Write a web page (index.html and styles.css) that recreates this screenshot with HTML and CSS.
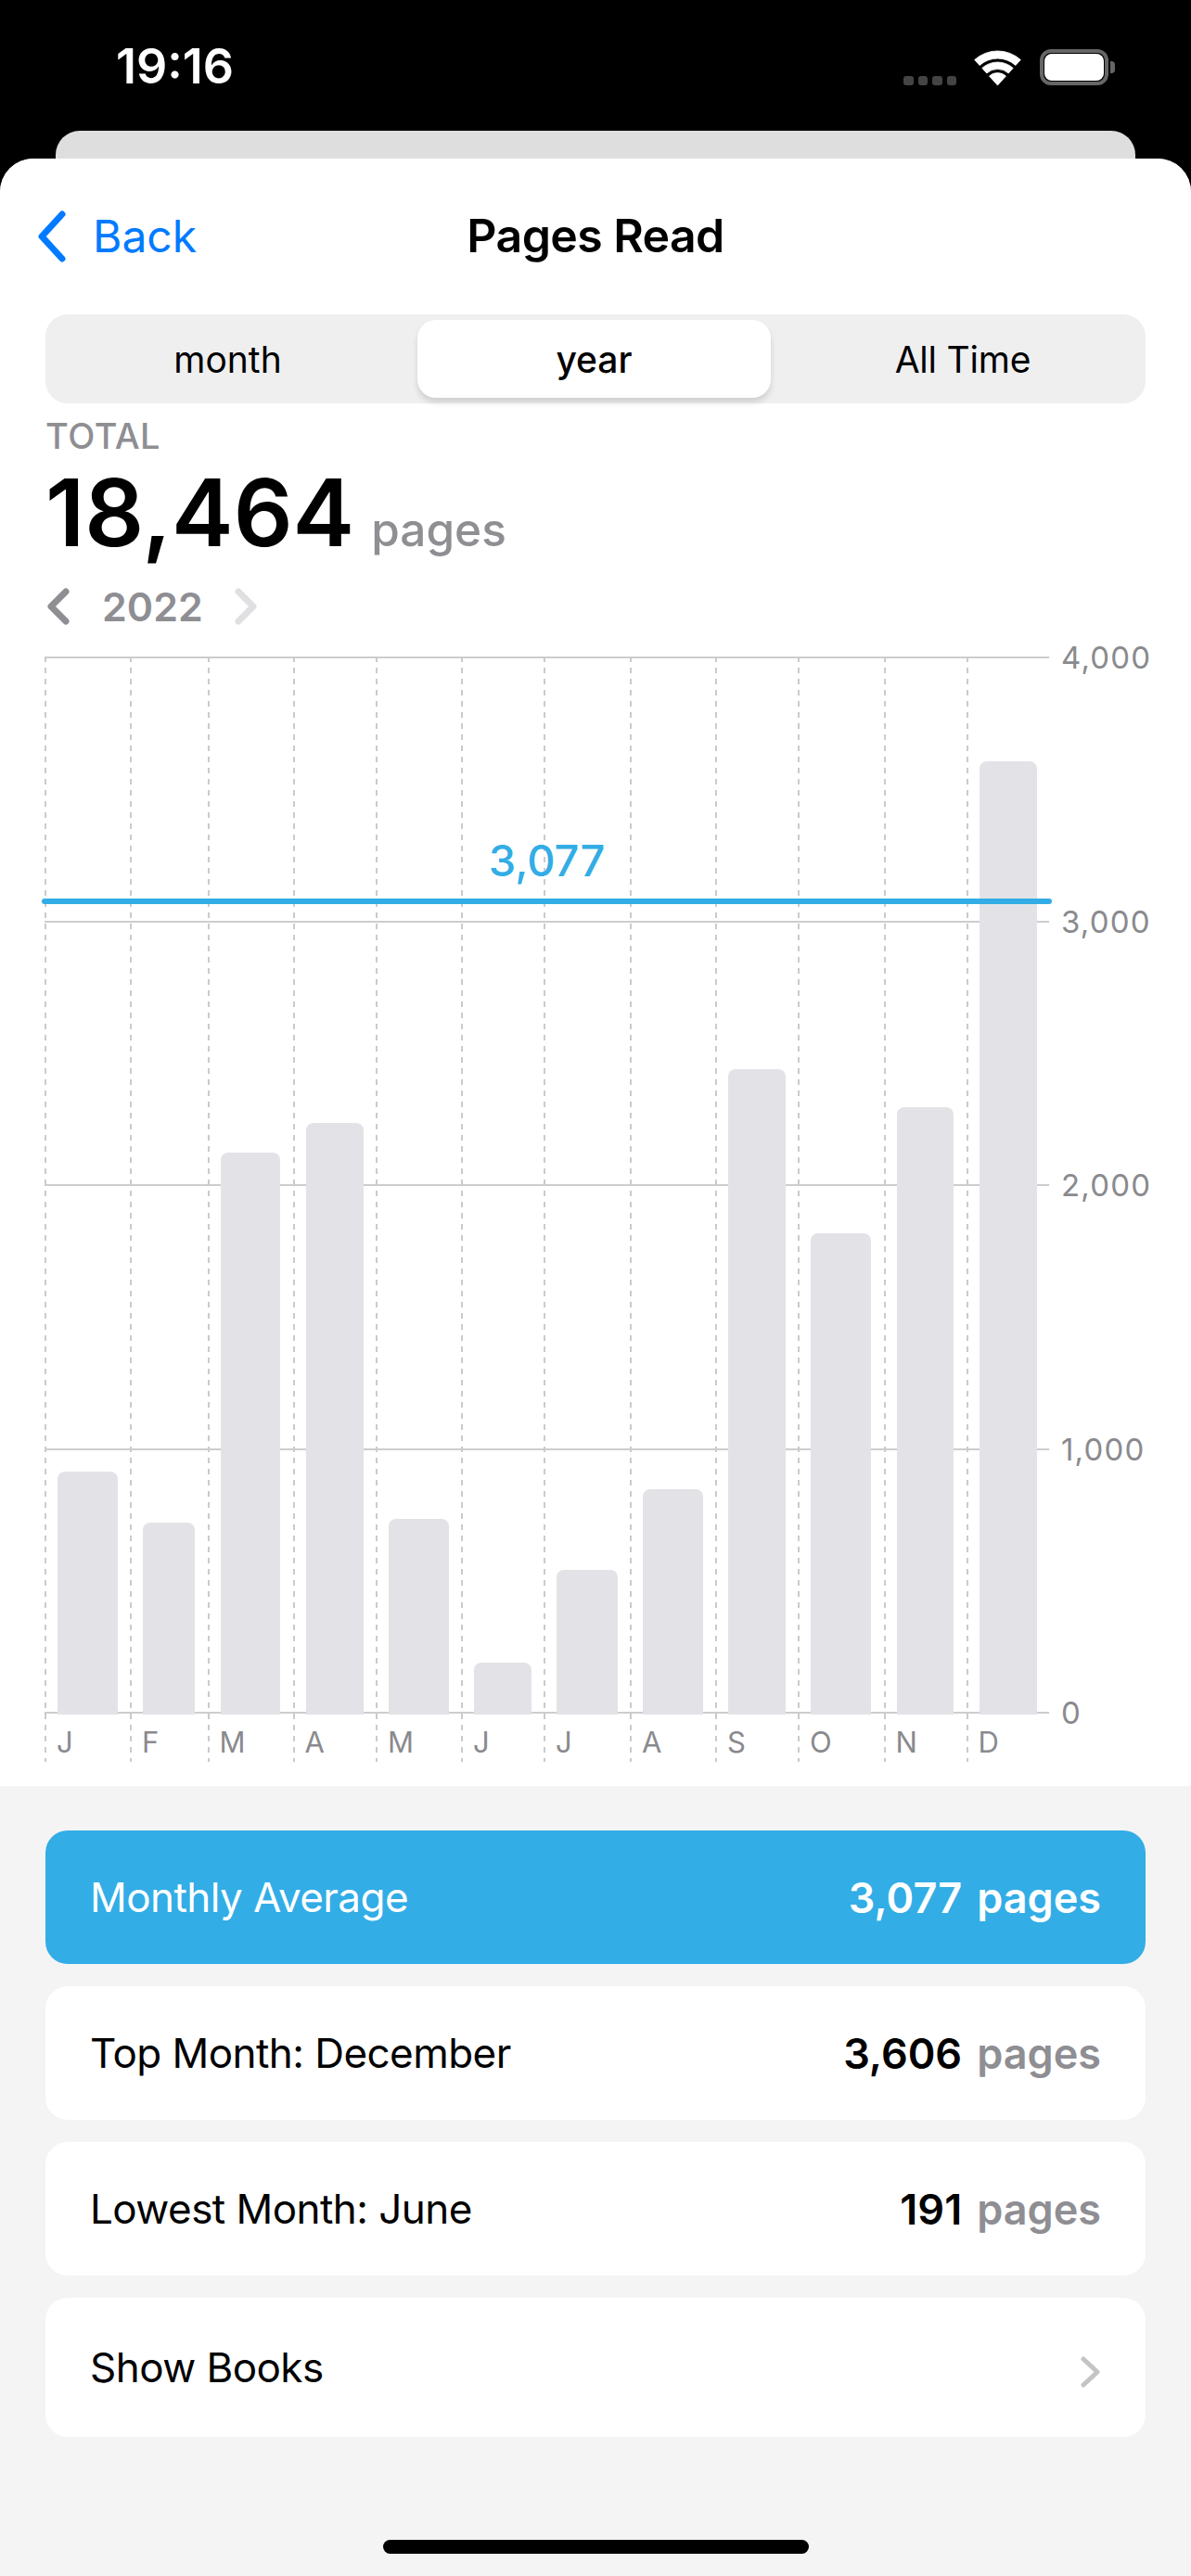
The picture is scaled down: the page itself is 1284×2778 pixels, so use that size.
FILE: index.html
```html
<!DOCTYPE html>
<html lang="en">
<head>
<meta charset="utf-8">
<title>Pages Read</title>
<link rel="stylesheet" href="styles.css">
</head>
<body>
<div class="screen">
  <header class="status">
    <span class="clock">19:16</span>
    <div class="status-icons">
      <div class="signal"><i></i><i></i><i></i><i></i></div>
      <svg class="wifi" viewBox="0 0 50 38"><path d="M0.200 10.500A37 37 0 0 1 49.800 10.500L44.400 16.500A29 29 0 0 0 5.600 16.500Z M8.300 19.400A25 25 0 0 1 41.700 19.400L36.700 25A17.500 17.500 0 0 0 13.300 25Z M16 28A13.500 13.500 0 0 1 34 28L25 38Z" fill="#fff" stroke="#fff" stroke-width=".8" stroke-linejoin="round"/></svg>
      <div class="battery"><div class="battery-fill"></div></div>
    </div>
  </header>
  <div class="back-card"></div>
  <main class="sheet">
    <section class="top">
      <nav class="navbar">
        <a class="back">
          <svg class="back-icon" viewBox="0 0 31 56"><path d="M27 4L5 28L27 52" fill="none" stroke="#007aff" stroke-width="7" stroke-linecap="round" stroke-linejoin="round"/></svg>
          <span>Back</span>
        </a>
        <h1 class="title">Pages Read</h1>
      </nav>
      <div class="segments">
        <span class="seg seg-first">month</span>
        <span class="seg seg-on">year</span>
        <span class="seg seg-last">All Time</span>
      </div>
      <div class="total-label">TOTAL</div>
      <div class="total"><span class="total-num">18,464</span><span class="total-unit">pages</span></div>
      <div class="year-nav">
        <svg class="year-chev" viewBox="0 0 24 40"><path d="M20 4L4 20L20 36" fill="none" stroke="#8e8e93" stroke-width="7" stroke-linecap="round" stroke-linejoin="round"/></svg>
        <span class="year">2022</span>
        <svg class="year-chev" viewBox="0 0 24 40"><path d="M4 4L20 20L4 36" fill="none" stroke="#e0e0e2" stroke-width="7" stroke-linecap="round" stroke-linejoin="round"/></svg>
      </div>
      <div class="chart">
        <div class="ticks">
          <div class="tick"><span class="tick-line"></span><span class="tick-label">4,000</span></div>
          <div class="tick"><span class="tick-line"></span><span class="tick-label">3,000</span></div>
          <div class="tick"><span class="tick-line"></span><span class="tick-label">2,000</span></div>
          <div class="tick"><span class="tick-line"></span><span class="tick-label">1,000</span></div>
          <div class="tick"><span class="tick-line"></span><span class="tick-label">0</span></div>
        </div>
        <div class="cols">
          <div class="col"><div class="plot"><div class="bar" style="height:262px"></div></div><span class="month">J</span></div>
          <div class="col"><div class="plot"><div class="bar" style="height:207px"></div></div><span class="month">F</span></div>
          <div class="col"><div class="plot"><div class="bar" style="height:606px"></div></div><span class="month">M</span></div>
          <div class="col"><div class="plot"><div class="bar" style="height:638px"></div></div><span class="month">A</span></div>
          <div class="col"><div class="plot"><div class="bar" style="height:211px"></div></div><span class="month">M</span></div>
          <div class="col"><div class="plot"><div class="bar" style="height:56px"></div></div><span class="month">J</span></div>
          <div class="col"><div class="plot"><div class="bar" style="height:156px"></div></div><span class="month">J</span></div>
          <div class="col"><div class="plot"><div class="bar" style="height:243px"></div></div><span class="month">A</span></div>
          <div class="col"><div class="plot"><div class="bar" style="height:696px"></div></div><span class="month">S</span></div>
          <div class="col"><div class="plot"><div class="bar" style="height:519px"></div></div><span class="month">O</span></div>
          <div class="col"><div class="plot"><div class="bar" style="height:655px"></div></div><span class="month">N</span></div>
          <div class="col"><div class="plot"><div class="bar" style="height:1028px"></div></div><span class="month">D</span></div>
        </div>
        <div class="avg"><span class="avg-value">3,077</span><div class="avg-line"></div></div>
      </div>
    </section>
    <section class="list">
      <div class="row row-accent"><span>Monthly Average</span><span class="val"><b>3,077</b><b class="unit">pages</b></span></div>
      <div class="row"><span>Top Month: December</span><span class="val"><b>3,606</b><b class="unit">pages</b></span></div>
      <div class="row"><span>Lowest Month: June</span><span class="val"><b>191</b><b class="unit">pages</b></span></div>
      <div class="row row-tall"><span>Show Books</span>
        <svg class="row-chev" viewBox="0 0 22 34"><path d="M3 3L18 17L3 31" fill="none" stroke="#c4c4c7" stroke-width="5" stroke-linecap="round" stroke-linejoin="round"/></svg>
      </div>
      <div class="home"></div>
    </section>
  </main>
</div>
</body>
</html>
```
FILE: styles.css
```css
* { box-sizing: border-box; }
html, body { margin: 0; padding: 0; }
body { background: #000; font-family: Inter, "Liberation Sans", sans-serif; -webkit-font-smoothing: antialiased; }
.screen { width: 1284px; height: 2778px; background: #000; overflow: hidden; display: flex; flex-direction: column; }

.status { height: 141px; flex: none; display: flex; justify-content: space-between; padding: 50px 89px 0 125px; align-items: flex-start; }
.clock { color: #fff; font-size: 52px; font-weight: 600; line-height: 44px; }
.status-icons { display: flex; align-items: flex-start; }
.signal { display: flex; gap: 5px; margin-top: 32px; margin-right: 19px; }
.signal i { width: 10.500px; height: 10px; border-radius: 3px; background: #444; }
.wifi { width: 51px; height: 38px; margin-top: 4px; margin-right: 20px; }
.battery { width: 74px; height: 39px; margin-top: 3px; border: 4px solid #666; border-radius: 12px; padding: 1px; position: relative; }
.battery::after { content: ""; position: absolute; right: -11px; top: 9px; width: 5px; height: 13px; background: #666; border-radius: 0 4px 4px 0; }
.battery-fill { width: 100%; height: 100%; background: #fff; border-radius: 8px; }

.back-card { flex: none; height: 30px; margin: 0 60px; background: #dedede; border-radius: 26px 26px 0 0; }

.sheet { flex: 1; min-height: 0; background: #f4f4f5; border-radius: 36px 36px 0 0; overflow: hidden; display: flex; flex-direction: column; }
.top { background: #fff; height: 1755px; flex: none; padding: 0 49px 0 48px; }

.navbar { height: 168px; display: flex; align-items: center; justify-content: center; position: relative; }
.back { position: absolute; left: -8px; top: 56px; display: flex; align-items: center; color: #007aff; font-size: 48px; line-height: 56px; }
.back-icon { width: 31px; height: 56px; margin-right: 29px; }
.title { margin: 0 0 0 1px; font-size: 50px; font-weight: 600; color: #000; line-height: 56px; transform: translateY(-1px); letter-spacing: -.6px; }

.segments { height: 96px; margin-left: 1px; background: #efeff0; border-radius: 24px; display: grid; grid-template-columns: 401px 381px 404px; padding: 6px 0; }
.seg { display: flex; align-items: center; justify-content: center; font-size: 39px; color: #000; border-radius: 20px; }
.seg-first { padding-right: 8px; }
.seg-last { padding-left: 10px; letter-spacing: -.2px; }
.seg-on { background: #fff; box-shadow: 0 5px 6px rgba(0,0,0,.13); font-weight: 500; }

.total-label { margin: 14px 0 0 1px; font-size: 38px; line-height: 42px; font-weight: 500; color: #8e8e93; letter-spacing: .5px; }
.total { margin: 8px 0 0 1px; display: flex; align-items: baseline; gap: 18px; line-height: 108px; height: 108px; }
.total-num { font-size: 100px; font-weight: 600; color: #000; }
.total-unit { font-size: 49.500px; font-weight: 500; color: #8e8e93; }
.year-nav { height: 40px; margin: 27px 0 0 3px; display: flex; align-items: center; }
.year-chev { width: 24px; height: 40px; }
.year { margin: 0 34px 0 35px; font-size: 43px; font-weight: 600; color: #8e8e93; line-height: 40px; }

.chart { position: relative; height: 1192px; margin-top: 34px; }
.ticks { position: absolute; left: 0; top: 0; height: 1140px; width: 100%; display: flex; flex-direction: column; justify-content: space-between; }
.tick { height: 2px; display: flex; align-items: center; }
.tick-line { width: 1083px; height: 2px; background: #cdcdcf; flex: none; }
.tick-label { margin-left: 13px; font-size: 33px; color: #8a8a8e; letter-spacing: 1.200px; }

.cols { position: absolute; left: 0; top: 0; display: grid; height: 100%; grid-template-columns: 92px 83.5px 92px 89.500px 92px 89px 93px 92px 89px 92.500px 89px 90px; }
.col { padding: 0 13.5px 0 14px; display: flex; flex-direction: column; background: repeating-linear-gradient(to bottom, #cbcbcd 0 6px, transparent 6px 12px) left top / 2px 100% no-repeat; }
.plot { height: 1141px; display: flex; align-items: flex-end; flex: none; }
.bar { width: 100%; background: #e3e3e7; border-radius: 8px 8px 0 0; }
.month { margin: 12px 0 0 -1px; font-size: 31px; line-height: 36px; color: #8a8a8e; }

.avg { position: absolute; left: -3px; top: 193px; width: 1089px; text-align: center; }
.avg-value { display: block; font-size: 47px; font-weight: 500; line-height: 54px; color: #32ade6; }
.avg-line { height: 6px; margin-top: 14px; border-radius: 3px; background: #32ade6; }

.list { padding: 48px 49px 0; flex: 1; min-height: 0; display: flex; flex-direction: column; gap: 24px; }
.row { height: 144px; flex: none; border-radius: 24px; background: #fff; display: flex; align-items: center; justify-content: space-between; padding: 0 48px; font-size: 44px; color: #000; letter-spacing: -.55px; }
.row-accent { background: #32ade6; color: #fff; }
.row-tall { height: 150px; }
.val { display: flex; gap: 16px; font-size: 45px; letter-spacing: 0; }
.val b { font-weight: 600; }
.val .unit { color: #8e8e93; }
.row-accent .val .unit { color: #fff; }
.row-chev { width: 22px; height: 34px; margin-top: 10px; }
.home { width: 459px; height: 15px; margin: 87px auto 0; background: #000; border-radius: 8px; flex: none; }
```
